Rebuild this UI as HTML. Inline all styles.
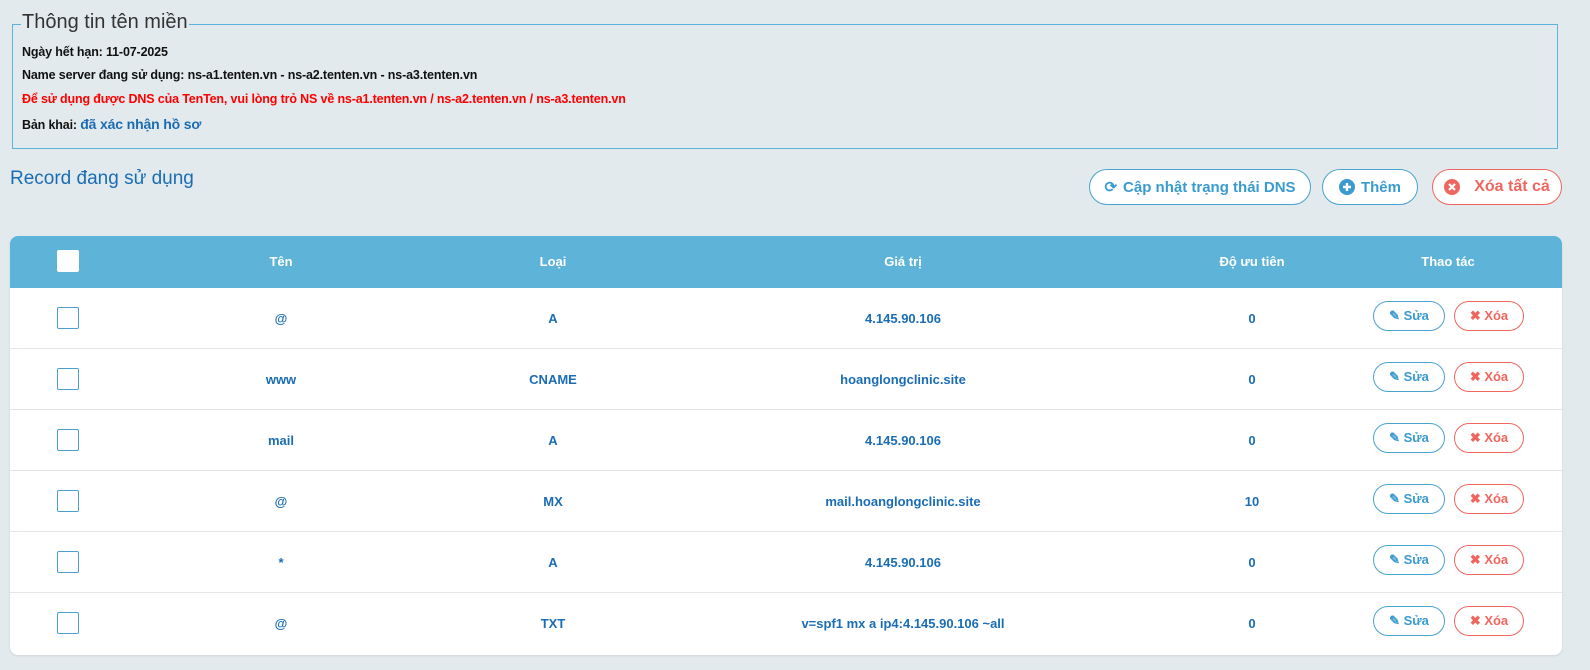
<!DOCTYPE html>
<html><head><meta charset="utf-8"><style>
*{box-sizing:border-box;margin:0;padding:0}
body{width:1590px;height:670px;background:#e3eaed;font-family:"Liberation Sans",sans-serif;position:relative;overflow:hidden}
.fs{position:absolute;left:12px;top:24px;width:1546px;height:125px;border:1px solid #5cb3dc}
.lg{position:absolute;left:21px;top:11px;font-size:20px;color:#333;background:#e3eaed;padding:0 1px}
.ln{position:absolute;left:22px;font-size:12.5px;font-weight:bold;color:#111;letter-spacing:-0.15px}
.h{position:absolute;left:10px;top:168px;font-size:19px;color:#1a6db5}
.btn{position:absolute;top:169px;height:36px;border:1px solid #4aa3cf;border-radius:18px;background:#fff;color:#3a9bd0;font-weight:bold;font-size:15px;display:flex;align-items:center;justify-content:center;gap:6px}
.tbl{position:absolute;left:10px;top:236px;width:1552px;height:419px;background:#fff;border-radius:8px;overflow:hidden;box-shadow:0 1px 2px rgba(0,0,0,.1)}
.hd{height:52px;background:#5eb3d8;position:relative}
.row{height:61px;border-bottom:1px solid #e5e5e5;position:relative}
.c{position:absolute;transform:translateX(-50%);font-size:13px;font-weight:bold;white-space:nowrap}
.hd .c{color:#fff;top:18px}
.row .c{color:#1a6db5;top:23px}
.cb{position:absolute;left:47px;width:22px;height:22px;border:1px solid #4a9fcf;border-radius:2px;background:#fff}
.sb{position:absolute;top:13px;height:30px;border:1px solid #4aa3cf;border-radius:15px;font-size:13px;font-weight:bold;color:#3a9bd0;display:flex;align-items:center;justify-content:center;gap:4px;background:#fff}
.btn.red,.sb.red{border-color:#f0665e;color:#f0665e}
</style></head><body>
<div class="fs"></div>
<div class="lg">Thông tin tên miền</div>
<div class="ln" style="top:45px">Ngày hết hạn: 11-07-2025</div>
<div class="ln" style="top:68px">Name server đang sử dụng: ns-a1.tenten.vn - ns-a2.tenten.vn - ns-a3.tenten.vn</div>
<div class="ln" style="top:92px;color:#f00">Để sử dụng được DNS của TenTen, vui lòng trỏ NS về ns-a1.tenten.vn / ns-a2.tenten.vn / ns-a3.tenten.vn</div>
<div class="ln" style="top:116px">Bản khai: <span style="color:#1a6db5;font-size:14px">đã xác nhận hồ sơ</span></div>
<div class="h">Record đang sử dụng</div>
<div class="btn" style="left:1089px;width:222px"><span>⟳</span>Cập nhật trạng thái DNS</div>
<div class="btn" style="left:1322px;width:96px"><svg width="16" height="16"><circle cx="8" cy="8" r="8" fill="#3a9bd0"/><path d="M8 4v8M4 8h8" stroke="#fff" stroke-width="2.4"/></svg>Thêm</div>
<div class="btn red" style="left:1432px;width:130px;gap:14px;font-size:16px"><svg width="16" height="16"><circle cx="8" cy="8" r="8" fill="#f0665e"/><path d="M5 5l6 6M11 5l-6 6" stroke="#fff" stroke-width="2.2"/></svg>Xóa tất cả</div>
<div class="tbl">
<div class="hd"><div class="cb" style="top:14px;border-color:#fff"></div>
<div class="c" style="left:271px">Tên</div><div class="c" style="left:543px">Loại</div><div class="c" style="left:893px">Giá trị</div><div class="c" style="left:1242px">Độ ưu tiên</div><div class="c" style="left:1438px">Thao tác</div></div>
<div class="row"><div class="cb" style="top:19px"></div><div class="c" style="left:271px">@</div><div class="c" style="left:543px">A</div><div class="c" style="left:893px">4.145.90.106</div><div class="c" style="left:1242px">0</div><div class="sb" style="left:1363px;width:72px">✎ Sửa</div><div class="sb red" style="left:1444px;width:70px">✖ Xóa</div></div>
<div class="row"><div class="cb" style="top:19px"></div><div class="c" style="left:271px">www</div><div class="c" style="left:543px">CNAME</div><div class="c" style="left:893px">hoanglongclinic.site</div><div class="c" style="left:1242px">0</div><div class="sb" style="left:1363px;width:72px">✎ Sửa</div><div class="sb red" style="left:1444px;width:70px">✖ Xóa</div></div>
<div class="row"><div class="cb" style="top:19px"></div><div class="c" style="left:271px">mail</div><div class="c" style="left:543px">A</div><div class="c" style="left:893px">4.145.90.106</div><div class="c" style="left:1242px">0</div><div class="sb" style="left:1363px;width:72px">✎ Sửa</div><div class="sb red" style="left:1444px;width:70px">✖ Xóa</div></div>
<div class="row"><div class="cb" style="top:19px"></div><div class="c" style="left:271px">@</div><div class="c" style="left:543px">MX</div><div class="c" style="left:893px">mail.hoanglongclinic.site</div><div class="c" style="left:1242px">10</div><div class="sb" style="left:1363px;width:72px">✎ Sửa</div><div class="sb red" style="left:1444px;width:70px">✖ Xóa</div></div>
<div class="row"><div class="cb" style="top:19px"></div><div class="c" style="left:271px">*</div><div class="c" style="left:543px">A</div><div class="c" style="left:893px">4.145.90.106</div><div class="c" style="left:1242px">0</div><div class="sb" style="left:1363px;width:72px">✎ Sửa</div><div class="sb red" style="left:1444px;width:70px">✖ Xóa</div></div>
<div class="row" style="border:0"><div class="cb" style="top:19px"></div><div class="c" style="left:271px">@</div><div class="c" style="left:543px">TXT</div><div class="c" style="left:893px">v=spf1 mx a ip4:4.145.90.106 ~all</div><div class="c" style="left:1242px">0</div><div class="sb" style="left:1363px;width:72px">✎ Sửa</div><div class="sb red" style="left:1444px;width:70px">✖ Xóa</div></div>
</div>
</body></html>
